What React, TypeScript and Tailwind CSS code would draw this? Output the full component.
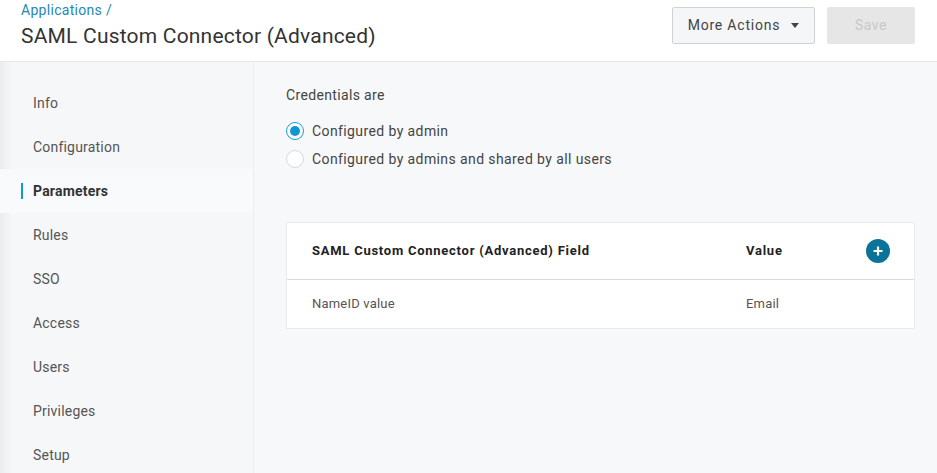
import { useState } from 'react';

export default function App() {
  const [active, setActive] = useState('Parameters');
  const [cred, setCred] = useState('admin');

  const tabs = ['Info', 'Configuration', 'Parameters', 'Rules', 'SSO', 'Access', 'Users', 'Privileges', 'Setup'];

  return (
    <div className="h-[473px] w-[937px] overflow-hidden bg-[#f7f8fa] font-['Roboto',sans-serif] text-[#444]">
      {/* Header */}
      <div className="flex h-[62px] items-start justify-between border-b border-[#e6e8eb] bg-white pl-[21px] pr-[22px]">
        <div className="pt-[1px]">
          <a className="block text-[14px] leading-[18px] tracking-[0.3px] text-[#1e88b6]">Applications /</a>
          <h1 className="mt-[4px] text-[21px] leading-[26px] tracking-[0.2px] text-[#333]">SAML Custom Connector (Advanced)</h1>
        </div>
        <div className="mt-[7px] flex gap-3">
          <button className="flex h-[37px] w-[143px] items-center justify-center gap-[11px] rounded-[2px] border border-[#cfd3d6] bg-[#f4f6f7] text-[14px] tracking-[0.8px] text-[#444]">
            More Actions
            <span className="h-0 w-0 border-x-[4px] border-t-[5px] border-x-transparent border-t-[#444]" />
          </button>
          <button className="h-[37px] w-[88px] rounded-[2px] bg-[#e6e6e6] text-[14px] tracking-[0.5px] text-[#c8c8c8]">Save</button>
        </div>
      </div>

      <div className="flex h-[411px]">
        {/* Sidebar */}
        <nav className="relative w-[254px] shrink-0 border-r border-[#eceef0] bg-[#f6f7f9] pt-[19px]">
          <div className="pointer-events-none absolute inset-y-0 left-0 w-[12px] bg-gradient-to-r from-[#ececec] to-transparent" />
          {tabs.map((t) => (
            <button
              key={t}
              onClick={() => setActive(t)}
              className={`relative flex h-[44px] w-full items-center pl-[33px] text-left text-[14px] tracking-[0.2px] ${
                active === t ? 'bg-[#f9fafb] font-bold text-[#333]' : 'text-[#555]'
              }`}
            >
              {active === t && <span className="absolute left-[21px] top-[14px] h-[16px] w-[2px] bg-[#0d9bd1]" />}
              {t}
            </button>
          ))}
        </nav>

        {/* Main */}
        <main className="flex-1 pl-[32px] pr-[22px] pt-[24px]">
          <p className="text-[14px] leading-[18px] tracking-[0.35px] text-[#444]">Credentials are</p>
          <div className="mt-[18px] flex flex-col gap-[10px]">
            {[
              { id: 'admin', label: 'Configured by admin' },
              { id: 'shared', label: 'Configured by admins and shared by all users' },
            ].map((o) => (
              <label key={o.id} className="flex cursor-pointer items-center gap-[8px] text-[14px] leading-[18px] tracking-[0.4px] text-[#444]" onClick={() => setCred(o.id)}>
                <span
                  className={`flex h-[18px] w-[18px] items-center justify-center rounded-full border bg-white ${
                    cred === o.id ? 'border-[#1a9ad6]' : 'border-[#d5d8db]'
                  }`}
                >
                  {cred === o.id && <span className="h-[10px] w-[10px] rounded-full bg-[#0e98d2]" />}
                </span>
                {o.label}
              </label>
            ))}
          </div>

          <div className="mt-[54px] border border-[#e8eaec] bg-white">
            <div className="flex h-[57px] items-center border-b border-[#d9dcdf] pl-[25px] pr-[24px] text-[13px] font-bold tracking-[0.75px] text-[#222]">
              <span className="w-[434px]">SAML Custom Connector (Advanced) Field</span>
              <span className="flex-1">Value</span>
              <button className="flex h-[24px] w-[24px] items-center justify-center rounded-full bg-[#0a7399]">
                <svg width="12" height="12" viewBox="0 0 12 12">
                  <path d="M6 1.5v9M1.5 6h9" stroke="white" strokeWidth="2.2" />
                </svg>
              </button>
            </div>
            <div className="flex h-[48px] items-center pl-[25px] text-[13px] tracking-[0.2px] text-[#555]">
              <span className="w-[434px]">NameID value</span>
              <span>Email</span>
            </div>
          </div>
        </main>
      </div>
    </div>
  );
}
